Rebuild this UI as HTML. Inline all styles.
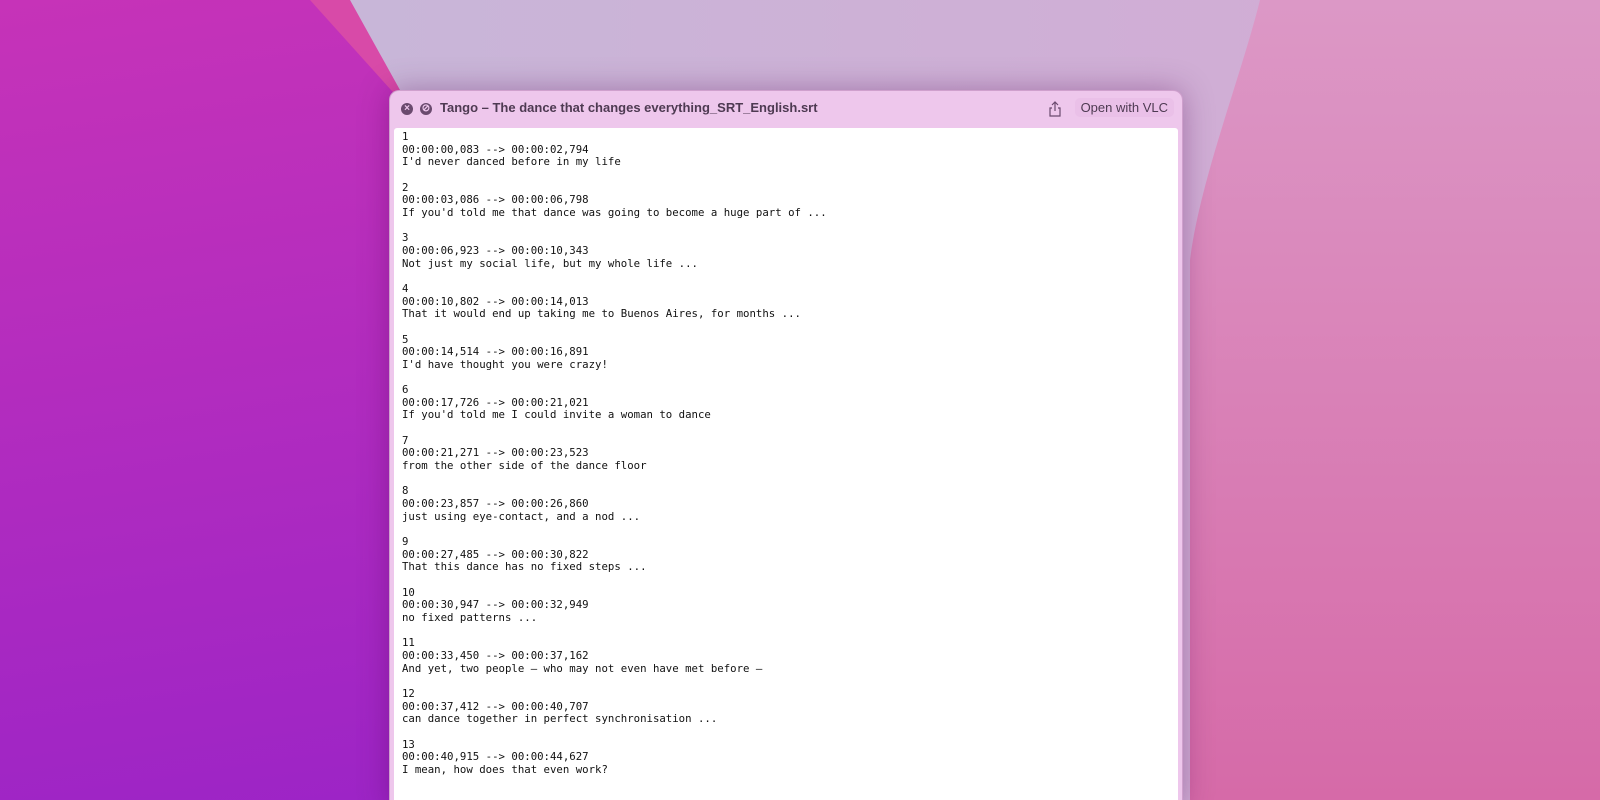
<!DOCTYPE html>
<html><head><meta charset="utf-8"><style>
html,body{margin:0;padding:0;width:1600px;height:800px;overflow:hidden}
body{position:relative;font-family:"Liberation Sans",sans-serif}
#bg{position:absolute;left:0;top:0}
.win{position:absolute;left:389px;top:90px;width:794px;height:720px;background:#eec7ec;border-radius:10px;box-shadow:0 0 30px rgba(80,0,80,.35);border:1px solid rgba(150,90,150,.35);box-sizing:border-box}
.title{position:absolute;left:50px;top:9px;font-size:13px;font-weight:bold;color:#4e3a52}
.ic{position:absolute;top:12px;width:12px;height:12px;border-radius:50%;background:#6a4a6e;color:#eec7ec;font-size:10px;line-height:12px;text-align:center;font-weight:bold}
.vlc{position:absolute;right:8px;top:7px;padding:2px 6px;font-size:13px;color:#4e3a52;border-radius:5px;background:#eac0e8}
.content{position:absolute;left:4px;top:37px;right:4px;bottom:0;background:#fff;border-radius:3px 3px 0 0;padding:3px 0 0 8px;box-sizing:border-box}
pre{margin:0;font-family:"DejaVu Sans Mono","Liberation Mono",monospace;font-size:10.7px;line-height:12.65px;color:#111}
</style></head><body>
<svg id="bg" width="1600" height="800" viewBox="0 0 1600 800">
<defs>
<linearGradient id="l" x1="0" y1="0" x2="0.3" y2="1"><stop offset="0" stop-color="#c633b8"/><stop offset="1" stop-color="#9c24c6"/></linearGradient>
<linearGradient id="m" x1="0" y1="0" x2="1" y2="0"><stop offset="0" stop-color="#c8b6d8"/><stop offset="1" stop-color="#d4aad4"/></linearGradient>
<linearGradient id="r" x1="0" y1="0" x2="0" y2="1"><stop offset="0" stop-color="#dc98c6"/><stop offset="1" stop-color="#d66aa8"/></linearGradient>
</defs>
<rect width="1600" height="800" fill="url(#l)"/>
<polygon points="310,0 1600,0 1600,800 420,800 400,100" fill="#d84aa8"/>
<polygon points="350,0 1600,0 1600,800 430,800 400,90" fill="url(#m)"/>
<path d="M1260,0 C1240,80 1200,180 1190,260 L1190,800 L1600,800 L1600,0 Z" fill="url(#r)"/>
</svg>
<div class="win">
<div class="ic" style="left:11px">×</div>
<div class="ic" style="left:30px">⊘</div>
<div class="title">Tango – The dance that changes everything_SRT_English.srt</div>
<svg style="position:absolute;left:658px;top:10px" width="14" height="16" viewBox="0 0 14 16"><path d="M7 1v9M4 4l3-3 3 3M4 7H2v8h10V7h-2" fill="none" stroke="#6a4a6e" stroke-width="1.2"/></svg>
<div class="vlc">Open with VLC</div>
<div class="content"><pre>1
00:00:00,083 --> 00:00:02,794
I'd never danced before in my life

2
00:00:03,086 --> 00:00:06,798
If you'd told me that dance was going to become a huge part of ...

3
00:00:06,923 --> 00:00:10,343
Not just my social life, but my whole life ...

4
00:00:10,802 --> 00:00:14,013
That it would end up taking me to Buenos Aires, for months ...

5
00:00:14,514 --> 00:00:16,891
I'd have thought you were crazy!

6
00:00:17,726 --> 00:00:21,021
If you'd told me I could invite a woman to dance

7
00:00:21,271 --> 00:00:23,523
from the other side of the dance floor

8
00:00:23,857 --> 00:00:26,860
just using eye-contact, and a nod ...

9
00:00:27,485 --> 00:00:30,822
That this dance has no fixed steps ...

10
00:00:30,947 --> 00:00:32,949
no fixed patterns ...

11
00:00:33,450 --> 00:00:37,162
And yet, two people — who may not even have met before —

12
00:00:37,412 --> 00:00:40,707
can dance together in perfect synchronisation ...

13
00:00:40,915 --> 00:00:44,627
I mean, how does that even work?</pre></div>
</div>
</body></html>
